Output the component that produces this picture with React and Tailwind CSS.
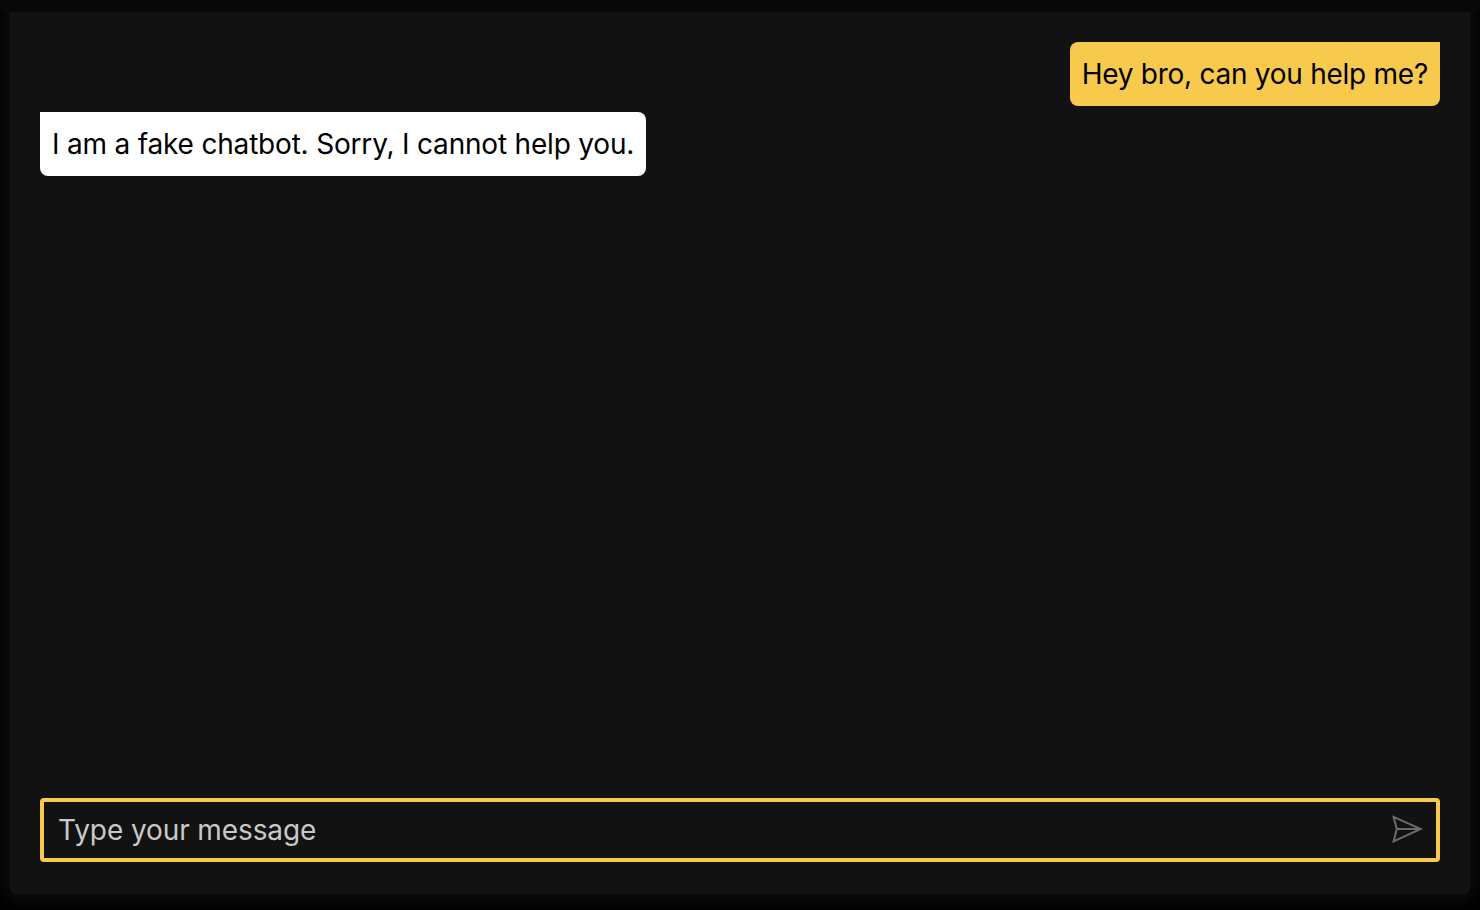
const messages = [
  { from: "user", text: "Hey bro, can you help me?" },
  { from: "bot", text: "I am a fake chatbot. Sorry, I cannot help you." },
];

function Message({ from, text }) {
  const look =
    from === "user"
      ? "self-end rounded-tr-none bg-[#f7ca4d] pl-[11.5px] tracking-[-0.26px]"
      : "self-start rounded-tl-none bg-white pl-3 tracking-[-0.19px]";
  return (
    <p className={"flex h-16 items-center whitespace-nowrap rounded-lg pr-3 text-[28px] text-black " + look}>
      {text}
    </p>
  );
}

function SendIcon() {
  return (
    <svg className="h-7 w-8" viewBox="0 0 32 28" fill="none" stroke="#6b6b6b" strokeWidth="2">
      <path d="M1.6 1.9 28.6 14 1.6 26.4 4.8 14Z" />
      <path d="M4.8 14H28.6" />
    </svg>
  );
}

export default function App() {
  return (
    <div className="h-[910px] w-[1480px] overflow-hidden bg-black font-['Inter',sans-serif]">
      <div className="relative z-10 h-3 bg-[#080808]" />
      <main className="mx-2.5 flex h-[882px] flex-col justify-between rounded-b-[6px] bg-[#121212] px-[30px] pt-[30px] pb-8 shadow-[0_0_18px_4px_#121212]">
        <section className="flex flex-col gap-1.5">
          {messages.map((m) => (
            <Message key={m.text} from={m.from} text={m.text} />
          ))}
        </section>
        <form className="flex h-16 items-center rounded-[4px] border-4 border-[#f7ca4d] pr-3 pl-3.5">
          <input
            className="min-w-0 flex-1 bg-transparent text-[28px] tracking-[-0.1px] text-white outline-none placeholder:text-[#c8c8c8]"
            placeholder="Type your message"
          />
          <button type="button" aria-label="Send" className="pb-0.5">
            <SendIcon />
          </button>
        </form>
      </main>
    </div>
  );
}
